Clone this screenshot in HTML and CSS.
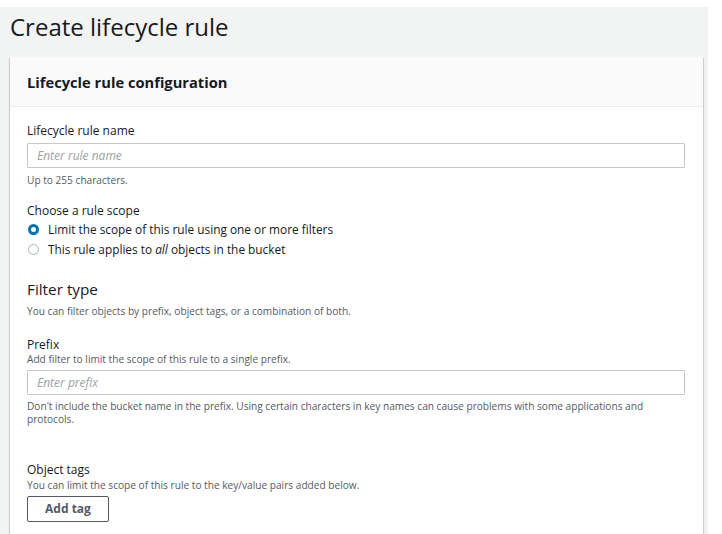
FILE: index.html
```html
<!DOCTYPE html>
<html>
<head>
<meta charset="utf-8">
<link rel="stylesheet" href="styles.css">
</head>
<body>
<div class="page">
  <h1 class="title">Create lifecycle rule</h1>
  <div class="card">
    <div class="card-header">Lifecycle rule configuration</div>
    <div class="card-body">
      <div class="label label-name">Lifecycle rule name</div>
      <div class="input"><span class="ph">Enter rule name</span></div>
      <div class="hint hint-name">Up to 255 characters.</div>

      <div class="label label-scope">Choose a rule scope</div>
      <div class="radio-row"><span class="radio checked"></span><span>Limit the scope of this rule using one or more filters</span></div>
      <div class="radio-row"><span class="radio"></span><span>This rule applies to <i>all</i> objects in the bucket</span></div>

      <h2 class="section">Filter type</h2>
      <div class="hint hint-section">You can filter objects by prefix, object tags, or a combination of both.</div>

      <div class="label label-prefix">Prefix</div>
      <div class="hint hint-desc">Add filter to limit the scope of this rule to a single prefix.</div>
      <div class="input input-prefix"><span class="ph">Enter prefix</span></div>
      <div class="hint hint-long">Don't include the bucket name in the prefix. Using certain characters in key names can cause problems with some applications and protocols.</div>

      <div class="label label-tags">Object tags</div>
      <div class="hint hint-desc">You can limit the scope of this rule to the key/value pairs added below.</div>
      <div class="button">Add tag</div>
    </div>
  </div>
</div>
</body>
</html>
```

FILE: styles.css
```css
* { box-sizing: border-box; }
html, body { margin: 0; padding: 0; background: #ffffff; }
body {
  font-family: "Open Sans", "Noto Sans", sans-serif;
  color: #16191f;
  height: 534px;
  overflow: hidden;
}
.page {
  margin-top: 7px;
  width: 708px;
  height: 527px;
  background: #f2f3f3;
}
.title {
  margin: 0;
  height: 50px;
  padding-left: 10px;
  font-size: 24px;
  font-weight: 400;
  line-height: 40px;
  color: #16191f;
}
.card {
  margin-left: 10px;
  width: 693px;
  background: #ffffff;
  box-shadow: 0 1px 1px 0 rgba(0,28,36,0.25), 1px 1px 1px 0 rgba(0,28,36,0.12), -1px 1px 1px 0 rgba(0,28,36,0.12);
  height: 477px;
}
.card-header {
  height: 50px;
  background: #fafafa;
  border-bottom: 1px solid #eaeded;
  padding-left: 17px;
  font-size: 14.7px;
  font-weight: 700;
  line-height: 50px;
}
.card-body {
  padding: 15px 17px 0 17px;
}
.label {
  font-size: 12px;
  line-height: 18px;
  font-weight: 500;
}
.input {
  width: 658px;
  height: 25px;
  border: 1px solid #c3c9cc;
  border-radius: 1px;
  padding-left: 9px;
  font-size: 12px;
  line-height: 23px;
  margin-top: 3px;
}
.ph { color: #99a3a4; font-style: italic; }
.hint {
  font-size: 10.15px;
  line-height: 14px;
  color: #545b64;
}
.hint-name { margin-top: 5px; }
.label-scope { margin-top: 16px; line-height: 16px; }
.radio-row {
  display: flex;
  align-items: center;
  height: 20px;
  font-size: 11.85px;
  gap: 9px;
  padding-left: 1px;
}
.radio {
  width: 11px;
  height: 11px;
  border-radius: 50%;
  border: 1px solid #aab7b8;
  flex: none;
}
.radio.checked {
  border: 3.5px solid #0073bb;
  background: #fff;
}
.section {
  margin: 19px 0 0 0;
  font-size: 15.3px;
  font-weight: 400;
  line-height: 22px;
}
.hint-section { margin-top: 4px; }
.label-prefix { margin-top: 20px; line-height: 14px; }
.input-prefix { margin-top: 4px; }
.hint-long { margin-top: 5px; line-height: 13px; max-width: 640px; }
.label-tags { margin-top: 36px; line-height: 16px; }
.button {
  margin-top: 4px;
  width: 82px;
  height: 26px;
  border: 1px solid #545b64;
  border-radius: 2px;
  text-align: center;
  font-size: 12px;
  font-weight: 700;
  line-height: 24px;
  color: #545b64;
}
```
